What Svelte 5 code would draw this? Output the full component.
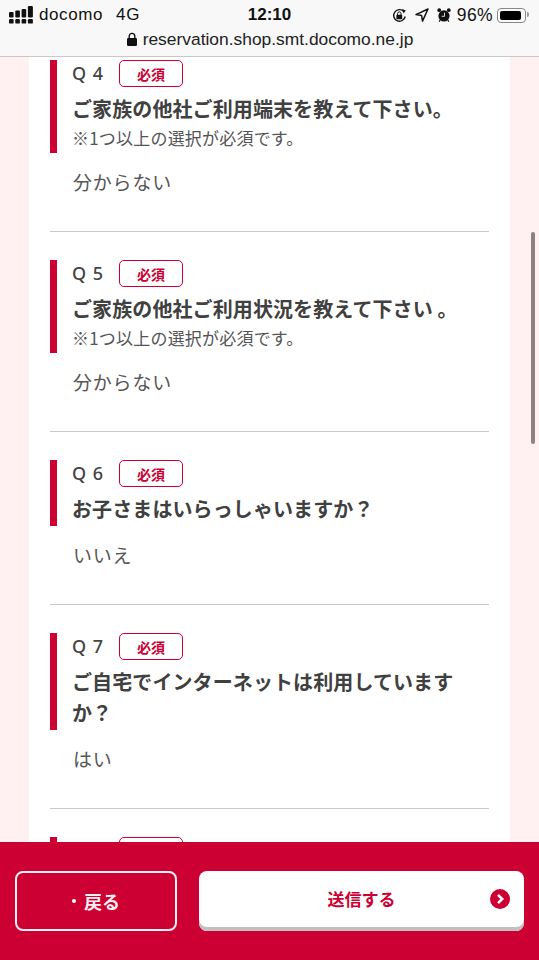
<script>
  const questions = [
    { no: 4, title: 'ご家族の他社ご利用端末を教えて下さい。', note: '※1つ以上の選択が必須です。', answer: '分からない' },
    { no: 5, title: 'ご家族の他社ご利用状況を教えて下さい 。', note: '※1つ以上の選択が必須です。', answer: '分からない' },
    { no: 6, title: 'お子さまはいらっしゃいますか？', answer: 'いいえ' },
    { no: 7, title: 'ご自宅でインターネットは利用していますか？', answer: 'はい' },
    { no: 8, title: '', answer: '', peek: true }
  ];
</script>

<div class="page">
  <header class="browser">
    <div class="status">
      <div class="carrier">
        <svg width="24" height="18" viewBox="0 0 24 18" fill="#111">
          <rect x="0" y="6" width="4.6" height="5.4" rx="1" />
          <rect x="6.3" y="4.6" width="4.6" height="6.8" rx="1" />
          <rect x="12.6" y="3" width="4.6" height="8.4" rx="1" />
          <rect x="18.9" y="0" width="5" height="11.4" rx="1.2" />
          <rect x="0" y="13" width="4.6" height="4.6" rx="1.2" />
          <rect x="6.3" y="13" width="4.6" height="4.6" rx="1.2" />
          <rect x="12.6" y="13" width="4.6" height="4.6" rx="1.2" />
          <rect x="18.9" y="13" width="5" height="4.6" rx="1.2" />
        </svg>
        <span class="name">docomo</span>
        <span class="net">4G</span>
      </div>
      <div class="time">12:10</div>
      <div class="right">
        <svg width="15" height="15" viewBox="0 0 15 15">
          <path d="M13.2 8.5A5.8 5.8 0 1 1 11.5 3.2" fill="none" stroke="#111" stroke-width="1.4" />
          <path d="M10 1l3.8 1.6-2.2 3z" fill="#111" />
          <rect x="4.4" y="6.8" width="5.8" height="4.4" rx=".6" fill="#111" />
          <path d="M5.6 7V5.6a1.7 1.7 0 0 1 3.4 0V7" fill="none" stroke="#111" />
        </svg>
        <svg class="arrow" width="14" height="14" viewBox="0 0 14 14">
          <path d="M13 1L1 6.6l5.6.9.9 5.6z" fill="none" stroke="#111" stroke-width="1.5" stroke-linejoin="round" />
        </svg>
        <svg class="alarm" width="14" height="16" viewBox="0 0 15 16" fill="#111">
          <circle cx="7.5" cy="9" r="6" />
          <circle cx="2.4" cy="2.8" r="2" />
          <circle cx="12.6" cy="2.8" r="2" />
          <path d="M8 5.5V9.4H5" fill="none" stroke="#fff" stroke-width=".9" />
          <path d="M3.5 13.6l-1.3 1.6M11.5 13.6l1.3 1.6" stroke="#111" stroke-width="1.3" />
        </svg>
        <span class="pct">96%</span>
        <div class="battery"><div class="level"></div></div>
      </div>
    </div>
    <div class="url">
      <svg width="12" height="14" viewBox="0 0 12 14" fill="#111">
        <rect x="1" y="6" width="10" height="8" rx="1.2" />
        <path d="M3.2 6.5V4.2a2.8 2.8 0 0 1 5.6 0v2.3" fill="none" stroke="#111" stroke-width="1.4" />
      </svg>
      <span>reservation.shop.smt.docomo.ne.jp</span>
    </div>
  </header>

  <main class="scroller">
    <section class="card">
      {#each questions as q, i}
        <article class="question" class:first={i === 0}>
          <div class="head">
            <div class="label">
              {#if q.peek}
                <span class="num"></span>
                <span class="badge"></span>
              {:else}
                <span class="num">Q {q.no}</span>
                <span class="badge">必須</span>
              {/if}
            </div>
            {#if q.title}<h2>{q.title}</h2>{/if}
            {#if q.note}<p class="note">{q.note}</p>{/if}
          </div>
          {#if q.answer}<p class="answer">{q.answer}</p>{/if}
        </article>
      {/each}
    </section>
    <div class="thumb"></div>
  </main>

  <footer class="actions">
    <button class="back"><span class="dot"></span>戻る</button>
    <button class="send">
      送信する
      <svg class="go" width="20" height="20" viewBox="0 0 20 20">
        <circle cx="10" cy="10" r="10" fill="#cc0033" />
        <path d="M8 5.8l4.2 4.2L8 14.2" fill="none" stroke="#fff" stroke-width="2.6" />
      </svg>
    </button>
  </footer>
</div>

<style>
  :global(body) {
    margin: 0;
    font-family: "Noto Sans CJK JP", "Noto Sans", sans-serif;
  }

  .page {
    width: 539px;
    height: 960px;
    display: flex;
    flex-direction: column;
    overflow: hidden;
    background: #fff0f2;
  }

  .browser {
    height: 57px;
    box-sizing: border-box;
    flex: none;
    background: #f8f8f8;
    border-bottom: 1px solid #c8c8c8;
    color: #111;
    font-family: "Liberation Sans", Arial, sans-serif;
  }

  .status {
    height: 30px;
    position: relative;
    display: flex;
    justify-content: space-between;
    align-items: center;
    padding: 0 10px 0 9px;
  }

  .carrier {
    display: flex;
    align-items: center;
    font-size: 17px;
  }

  .name {
    margin-left: 6px;
    letter-spacing: 0.6px;
  }

  .net {
    margin-left: 13px;
    letter-spacing: 0.6px;
  }

  .time {
    position: absolute;
    left: 0;
    right: 0;
    text-align: center;
    font-size: 17px;
    font-weight: 700;
  }

  .right {
    display: flex;
    align-items: center;
    font-size: 17.5px;
  }

  .arrow {
    margin-left: 8px;
  }

  .alarm {
    margin-left: 8px;
  }

  .pct {
    margin-left: 6px;
    letter-spacing: 0.4px;
  }

  .battery {
    width: 29px;
    height: 15px;
    box-sizing: border-box;
    margin: 0 3px 0 4px;
    padding: 2px;
    border: 1px solid #888;
    border-radius: 4px;
    position: relative;
  }

  .battery::after {
    content: '';
    position: absolute;
    right: -4px;
    top: 3px;
    width: 2px;
    height: 5px;
    background: #999;
    border-radius: 0 2px 2px 0;
  }

  .level {
    width: 90%;
    height: 100%;
    background: #000;
    border-radius: 2px;
  }

  .url {
    display: flex;
    align-items: center;
    justify-content: center;
    gap: 5px;
    margin-top: -1px;
    font-size: 17.4px;
    line-height: 20px;
    color: #222;
  }

  .scroller {
    flex: 1;
    min-height: 0;
    overflow: hidden;
    position: relative;
  }

  .thumb {
    position: absolute;
    left: 531px;
    top: 175px;
    width: 4px;
    height: 212px;
    border-radius: 2px;
    background: #8f8185;
  }

  .card {
    width: 481px;
    margin-left: 29px;
    box-sizing: border-box;
    padding: 0 21px;
    background: #fff;
  }

  .question {
    padding-top: 28px;
    padding-bottom: 34px;
    border-bottom: 1px solid #c9c9c9;
  }

  .question.first {
    padding-top: 3px;
  }

  .question:last-child {
    border-bottom: none;
  }

  .head {
    border-left: 7px solid #cc0033;
    padding-left: 15px;
  }

  .label {
    display: flex;
    align-items: center;
    height: 27px;
  }

  .num {
    width: 47px;
    padding-bottom: 2px;
    font-family: "Noto Sans", sans-serif;
    font-weight: 500;
    font-size: 18px;
    letter-spacing: 1px;
    color: #444;
  }

  .badge {
    width: 64px;
    height: 27px;
    box-sizing: border-box;
    display: flex;
    align-items: center;
    justify-content: center;
    border: 1.5px solid #cc0033;
    border-radius: 5px;
    color: #cc0033;
    font-size: 14px;
    font-weight: 700;
  }

  h2 {
    margin: 6px 0 0;
    padding-bottom: 2px;
    max-width: 390px;
    font-size: 20px;
    line-height: 31px;
    letter-spacing: 0.1px;
    font-weight: 700;
    color: #404040;
  }

  .note {
    margin: 0;
    height: 27px;
    font-size: 17px;
    line-height: 24px;
    letter-spacing: 0.2px;
    color: #555;
  }

  .answer {
    margin: 14px 0 0 23px;
    font-size: 19px;
    line-height: 30px;
    letter-spacing: 0.8px;
    color: #555;
  }

  .actions {
    height: 118px;
    flex: none;
    box-sizing: border-box;
    position: relative;
    display: flex;
    gap: 22px;
    padding: 29px 15px 0;
    background: #cc0033;
  }

  button {
    height: 60px;
    border-radius: 8px;
    font-family: inherit;
    font-size: 17px;
    font-weight: 700;
    display: flex;
    align-items: center;
    justify-content: center;
  }

  .back {
    width: 162px;
    border: 2px solid #fff0f2;
    background: transparent;
    color: #fff0f2;
    font-size: 18px;
    padding-bottom: 2px;
  }

  .dot {
    width: 4px;
    height: 4px;
    margin-right: 8px;
    border-radius: 50%;
    background: #fff;
  }

  .send {
    width: 325px;
    position: relative;
    border: none;
    padding-bottom: 6px;
    background: #fff;
    color: #cc0033;
    box-shadow: inset 0 -4px 0 #c4c0c2;
  }

  .go {
    position: absolute;
    right: 14px;
    top: 18px;
  }
</style>
